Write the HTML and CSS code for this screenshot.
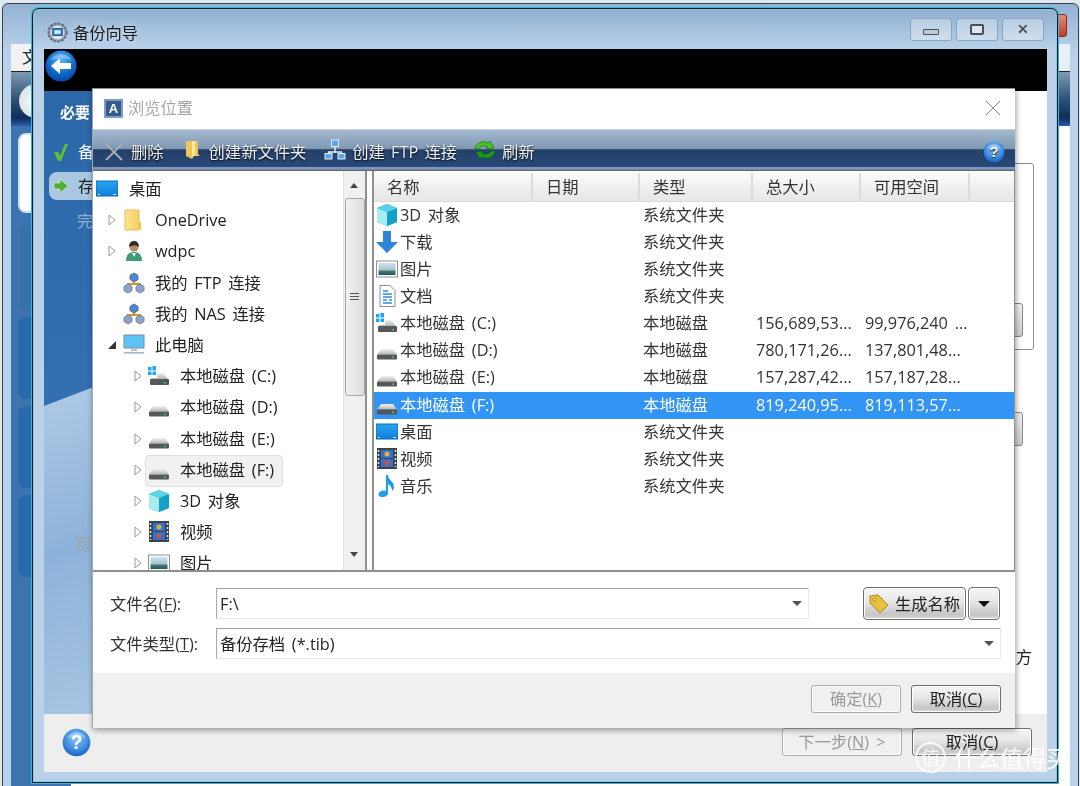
FILE: index.html
```html
<!DOCTYPE html>
<html lang="zh">
<head>
<meta charset="utf-8">
<title>备份向导</title>
<link rel="stylesheet" href="styles.css">
</head>
<body>
<svg class="sprite" width="0" height="0" aria-hidden="true">
  <defs>
    <linearGradient id="gDesk" x1="0" y1="0" x2="0" y2="1"><stop offset="0" stop-color="#2aa3f5"/><stop offset="1" stop-color="#0f7fd8"/></linearGradient>
    <linearGradient id="gFolder" x1="0" y1="0" x2="1" y2="0"><stop offset="0" stop-color="#ffe48f"/><stop offset="1" stop-color="#f6cf62"/></linearGradient>
    <linearGradient id="gDrive" x1="0" y1="0" x2="0" y2="1"><stop offset="0" stop-color="#f2f2f2"/><stop offset="1" stop-color="#b4b4b4"/></linearGradient>
    <linearGradient id="gPic" x1="0" y1="0" x2="0" y2="1"><stop offset="0" stop-color="#cfe3f2"/><stop offset=".55" stop-color="#a5c4d6"/><stop offset=".7" stop-color="#3f7a5c"/><stop offset="1" stop-color="#27506a"/></linearGradient>
    <radialGradient id="gOrb" cx=".5" cy=".35" r=".7"><stop offset="0" stop-color="#8cc6f7"/><stop offset=".6" stop-color="#3d8de0"/><stop offset="1" stop-color="#1459b8"/></radialGradient>
    <radialGradient id="gBack" cx=".5" cy=".3" r=".75"><stop offset="0" stop-color="#5fb6f5"/><stop offset=".6" stop-color="#0f67c9"/><stop offset="1" stop-color="#063f98"/></radialGradient>
    <symbol id="i-desk" viewBox="0 0 22 22"><rect x="0" y="3" width="22" height="15" fill="url(#gDesk)" stroke="#0b6dbc"/><path d="M2 16.500h2M17 16.500h3" stroke="#dff1ff"/></symbol>
    <symbol id="i-folder" viewBox="0 0 22 22"><path d="M2 1h11l3 0v20H2z" fill="url(#gFolder)" stroke="#e8c05a"/><path d="M15 13l3 0v8h-3z" fill="#f1c54f"/></symbol>
    <symbol id="i-user" viewBox="0 0 22 22"><path d="M3 21c0-6 3-9 8-9s8 3 8 9z" fill="#3e9d72"/><path d="M9 13l2 4 2-4z" fill="#fff"/><circle cx="11" cy="7" r="4.600" fill="#b98a6a"/><path d="M6 7c0-5 3-6 5-6s5 1 5 6c-2-2-7-2-10 0z" fill="#3a2a20"/></symbol>
    <symbol id="i-net" viewBox="0 0 22 22"><path d="M11 7v6M5 14v-2h12v2" stroke="#c79a2e" stroke-width="1.800" fill="none"/><path d="M11 1l4 2.500v4L11 10 7 7.500v-4z" fill="#4f86d6" stroke="#5a6a86"/><path d="M5 12l4 2.500v4L5 21l-4-2.500v-4z" fill="#8aa4cf" stroke="#7c8296"/><path d="M17 12l4 2.500v4L17 21l-4-2.500v-4z" fill="#8aa4cf" stroke="#7c8296"/></symbol>
    <symbol id="i-netw" viewBox="0 0 22 22"><path d="M11 8v6M4.500 15v-2h13v2" stroke="#e8eef6" stroke-width="1.400" fill="none"/><rect x="7.500" y="1" width="7" height="6.500" fill="#5aa6ee" stroke="#e8eef6"/><rect x="1" y="14.500" width="7" height="5.500" fill="#5aa6ee" stroke="#e8eef6"/><rect x="14" y="14.500" width="7" height="5.500" fill="#5aa6ee" stroke="#e8eef6"/></symbol>
    <symbol id="i-pc" viewBox="0 0 22 22"><rect x="1" y="1" width="20" height="13" fill="#5cc4f5" stroke="#7d8ba0"/><rect x="8" y="15" width="6" height="2" fill="#b8c0cc"/><rect x="1" y="18" width="20" height="1.600" fill="#a9b6c6"/></symbol>
    <symbol id="i-drive" viewBox="0 0 22 22"><path d="M5 10h12l4 5.500H1z" fill="url(#gDrive)"/><rect x="1" y="15.500" width="20" height="5" rx="1" fill="#55575a"/><rect x="16" y="17.500" width="2" height="1.500" fill="#3fd04f"/></symbol>
    <symbol id="i-sys" viewBox="0 0 22 22"><g fill="#1fa6f0"><rect x="0" y="2" width="3.500" height="3.500"/><rect x="4.500" y="1" width="3.500" height="4.500"/><rect x="0" y="6.500" width="3.500" height="3.500"/><rect x="4.500" y="6.500" width="3.500" height="3.500"/></g><path d="M9 8h6l5 6H3l1-1h5z" fill="url(#gDrive)"/><rect x="2" y="14" width="19" height="6" rx="1" fill="#55575a"/><rect x="16" y="17" width="2" height="1.500" fill="#3fd04f"/></symbol>
    <symbol id="i-cube" viewBox="0 0 22 22"><path d="M11 0l10 4v14l-10 4-10-4V4z" fill="#2cb6d8"/><path d="M1 4l10 4v14l-10-4z" fill="#a6ecf0"/><path d="M11 8l10-4v14l-10 4z" fill="#13a0c9"/><path d="M11 0l10 4-10 4L1 4z" fill="#5bd2e6"/></symbol>
    <symbol id="i-video" viewBox="0 0 22 22"><rect x="1" y="0" width="20" height="21" fill="#3e4348"/><rect x="5" y="2" width="12" height="8" fill="#2e72d6"/><rect x="5" y="11" width="12" height="8" fill="#2e72d6"/><circle cx="11" cy="6" r="2.500" fill="#e9b02f"/><circle cx="11" cy="15" r="2.500" fill="#d94f36"/><path d="M2.500 2v17M19.500 2v17" stroke="#dfe4ea" stroke-width="1.500" stroke-dasharray="2 2"/></symbol>
    <symbol id="i-pic" viewBox="0 0 22 22"><rect x=".5" y="3" width="21" height="16" fill="#fff" stroke="#8c8f93"/><rect x="2.500" y="5" width="17" height="12" fill="url(#gPic)"/></symbol>
    <symbol id="i-down" viewBox="0 0 22 22"><path d="M7 0h8v11h7L11 22 0 11h7z" fill="#2d84d8"/></symbol>
    <symbol id="i-doc" viewBox="0 0 22 22"><path d="M4 .5h10l5 5v16H4z" fill="#fff" stroke="#8a8f96"/><path d="M7 6h5M7 9h9M7 12h9M7 15h4M13 15h3M7 18h9" stroke="#2f8ae0" stroke-width="1.400"/></symbol>
    <symbol id="i-music" viewBox="0 0 22 22"><path d="M10 0h2c0 5 6 6 6 12 0 2-1 3-2 4 0-4-2-6-4-7v9c0 3-3 4-6 4-3 0-4-2-3-4s4-3 7-2z" fill="#1d9ce8"/></symbol>
    <symbol id="i-closed" viewBox="0 0 8 12"><path d="M1 1l6 5-6 5z" fill="#fff" stroke="#9a9a9a"/></symbol>
    <symbol id="i-open" viewBox="0 0 8 8"><path d="M8 0v8H0z" fill="#333"/></symbol>
    <symbol id="i-help" viewBox="0 0 22 22"><circle cx="11" cy="11" r="10.500" fill="url(#gOrb)"/><path d="M4 8c2-6 12-6 14 0-4-2-10-2-14 0z" fill="#fff" opacity=".35"/><text x="11" y="16" text-anchor="middle" class="help-mark">?</text></symbol>
    <symbol id="i-app" viewBox="0 0 24 24"><circle cx="12" cy="12" r="10.500" fill="#8a9aae" stroke="#5d6b80" stroke-width="2" stroke-dasharray="3 1.500"/><circle cx="12" cy="12" r="8" fill="#dbe6f0"/><rect x="6.500" y="7.500" width="11" height="8" fill="#3f83c9" stroke="#234a78"/><rect x="8.500" y="9.500" width="7" height="4" fill="#d8ecfb"/></symbol>
  </defs>
</svg>

<main class="desktop">
  <section class="win win-back">
    <header class="back-title"><span class="back-close"></span></header>
    <div class="back-tabs"><span class="back-tab">文</span></div>
    <div class="back-band"><span class="back-orb"></span></div>
    <div class="back-body">
      <aside class="back-side">
        <div class="back-card"></div>
        <div class="back-block faint"></div>
        <div class="back-block"></div>
        <div class="back-block"></div>
        <div class="back-block"></div>
      </aside>
      <div class="back-main"></div>
    </div>
  </section>

  <section class="win win-front">
    <header class="front-title">
      <svg class="ico-app"><use href="#i-app"/></svg>
      <h1 class="front-heading">备份向导</h1>
      <div class="caption">
        <span class="cap-btn"><i class="cap-min"></i></span>
        <span class="cap-btn"><i class="cap-max"></i></span>
        <span class="cap-btn cap-x">✕</span>
      </div>
    </header>
    <div class="front-inner">
      <div class="black-bar">
        <svg class="back-btn" viewBox="0 0 32 32"><circle cx="16" cy="16" r="15.500" fill="url(#gBack)"/><path d="M5 10c5-8 17-8 22 0-6-2-16-2-22 0z" fill="#fff" opacity=".3"/><path d="M6 16l9-8v5h11v6H15v5z" fill="#fff"/></svg>
      </div>
      <div class="front-body">
        <aside class="wiz-side">
          <div class="wiz-head">必要</div>
          <div class="wiz-step">
            <svg class="wiz-ico" viewBox="0 0 16 18"><path d="M1 9l4 0 2 4 5-12 3 0-7 17H5z" fill="#5fc331"/></svg>
            <span>备</span>
          </div>
          <div class="wiz-step is-current">
            <svg class="wiz-ico" viewBox="0 0 16 16"><path d="M1 5h6V1l8 7-8 7v-4H1z" fill="#4cae34" stroke="#e8f5df" stroke-width=".6"/></svg>
            <span>存</span>
          </div>
          <div class="wiz-step is-later"><span>完</span></div>
          <div class="wiz-other">可</div>
        </aside>
        <div class="wiz-main">
          <div class="group-box"><span class="stub stub-a"></span></div>
          <span class="stub stub-b"></span>
          <span class="side-word">方</span>
        </div>
      </div>
      <footer class="wiz-foot">
        <svg class="wiz-help"><use href="#i-help"/></svg>
        <button class="btn is-disabled btn-next">下一步(<u>N</u>) &gt;</button>
        <button class="btn btn-cancel">取消(<u>C</u>)</button>
      </footer>
    </div>
  </section>

  <section class="dialog">
    <header class="dlg-title">
      <span class="dlg-logo">A</span>
      <h2 class="dlg-heading">浏览位置</h2>
      <span class="dlg-close"></span>
    </header>
    <nav class="toolbar">
      <span class="tool tool-del"><svg class="tool-x" viewBox="0 0 18 18"><path d="M1 1l16 16M17 1L1 17" stroke="#a9afb6" stroke-width="1.800"/></svg>删除</span>
      <span class="tool tool-new"><svg class="tool-folder" viewBox="0 0 16 20"><path d="M2 1h6l6 0v13l2 2h-6l-2 3-6-3z" fill="#eec55a"/><path d="M8 1h3v15H8z" fill="#fbe9a2"/></svg>创建新文件夹</span>
      <span class="tool tool-ftp"><svg class="tool-net"><use href="#i-netw"/></svg>创建 FTP 连接</span>
      <span class="tool tool-refresh"><svg class="tool-ref" viewBox="0 0 22 20"><path d="M1 9c1-6 7-9 13-6l2-2 4 7-8 1 2-2c-4-2-8-1-9 2z" fill="#46c61f" stroke="#0e5c12" stroke-width=".6"/><path d="M21 11c-1 6-7 9-13 6l-2 2-4-7 8-1-2 2c4 2 8 1 9-2z" fill="#179a1c" stroke="#0e5c12" stroke-width=".6"/></svg>刷新</span>
      <svg class="tool-help"><use href="#i-help"/></svg>
    </nav>

    <div class="panes">
      <div class="tree-pane">
        <ul class="tree">
          <li class="node l0"><svg class="ico"><use href="#i-desk"/></svg><span>桌面</span></li>
          <li class="node l1"><svg class="arrow"><use href="#i-closed"/></svg><svg class="ico"><use href="#i-folder"/></svg><span>OneDrive</span></li>
          <li class="node l1"><svg class="arrow"><use href="#i-closed"/></svg><svg class="ico"><use href="#i-user"/></svg><span>wdpc</span></li>
          <li class="node l1"><i class="arrow"></i><svg class="ico"><use href="#i-net"/></svg><span>我的 FTP 连接</span></li>
          <li class="node l1"><i class="arrow"></i><svg class="ico"><use href="#i-net"/></svg><span>我的 NAS 连接</span></li>
          <li class="node l1"><svg class="arrow"><use href="#i-open"/></svg><svg class="ico"><use href="#i-pc"/></svg><span>此电脑</span></li>
          <li class="node l2"><svg class="arrow"><use href="#i-closed"/></svg><svg class="ico"><use href="#i-sys"/></svg><span>本地磁盘 (C:)</span></li>
          <li class="node l2"><svg class="arrow"><use href="#i-closed"/></svg><svg class="ico"><use href="#i-drive"/></svg><span>本地磁盘 (D:)</span></li>
          <li class="node l2"><svg class="arrow"><use href="#i-closed"/></svg><svg class="ico"><use href="#i-drive"/></svg><span>本地磁盘 (E:)</span></li>
          <li class="node l2 is-picked"><svg class="arrow"><use href="#i-closed"/></svg><svg class="ico"><use href="#i-drive"/></svg><span>本地磁盘 (F:)</span></li>
          <li class="node l2"><svg class="arrow"><use href="#i-closed"/></svg><svg class="ico"><use href="#i-cube"/></svg><span>3D 对象</span></li>
          <li class="node l2"><svg class="arrow"><use href="#i-closed"/></svg><svg class="ico"><use href="#i-video"/></svg><span>视频</span></li>
          <li class="node l2"><svg class="arrow"><use href="#i-closed"/></svg><svg class="ico"><use href="#i-pic"/></svg><span>图片</span></li>
        </ul>
        <div class="vscroll">
          <span class="sb-up"></span>
          <span class="sb-thumb"><i></i></span>
          <span class="sb-down"></span>
        </div>
      </div>

      <div class="list-pane">
        <div class="list-head">
          <span>名称</span><span>日期</span><span>类型</span><span>总大小</span><span>可用空间</span><span></span>
        </div>
        <div class="row"><span class="name"><svg class="ico"><use href="#i-cube"/></svg>3D 对象</span><span>系统文件夹</span><span></span><span></span></div>
        <div class="row"><span class="name"><svg class="ico"><use href="#i-down"/></svg>下载</span><span>系统文件夹</span><span></span><span></span></div>
        <div class="row"><span class="name"><svg class="ico"><use href="#i-pic"/></svg>图片</span><span>系统文件夹</span><span></span><span></span></div>
        <div class="row"><span class="name"><svg class="ico"><use href="#i-doc"/></svg>文档</span><span>系统文件夹</span><span></span><span></span></div>
        <div class="row"><span class="name"><svg class="ico"><use href="#i-sys"/></svg>本地磁盘 (C:)</span><span>本地磁盘</span><span>156,689,53...</span><span>99,976,240 ...</span></div>
        <div class="row"><span class="name"><svg class="ico"><use href="#i-drive"/></svg>本地磁盘 (D:)</span><span>本地磁盘</span><span>780,171,26...</span><span>137,801,48...</span></div>
        <div class="row"><span class="name"><svg class="ico"><use href="#i-drive"/></svg>本地磁盘 (E:)</span><span>本地磁盘</span><span>157,287,42...</span><span>157,187,28...</span></div>
        <div class="row is-selected"><span class="name"><svg class="ico"><use href="#i-drive"/></svg>本地磁盘 (F:)</span><span>本地磁盘</span><span>819,240,95...</span><span>819,113,57...</span></div>
        <div class="row"><span class="name"><svg class="ico"><use href="#i-desk"/></svg>桌面</span><span>系统文件夹</span><span></span><span></span></div>
        <div class="row"><span class="name"><svg class="ico"><use href="#i-video"/></svg>视频</span><span>系统文件夹</span><span></span><span></span></div>
        <div class="row"><span class="name"><svg class="ico"><use href="#i-music"/></svg>音乐</span><span>系统文件夹</span><span></span><span></span></div>
      </div>
    </div>

    <form class="dlg-form">
      <div class="form-row row-name">
        <label class="form-label">文件名(<u>F</u>):</label>
        <div class="combo combo-name"><span>F:\</span><i class="combo-arrow"></i></div>
        <button type="button" class="btn btn-gen">
          <svg class="tag" viewBox="0 0 20 20"><path d="M1 2l8-1 10 10-8 8L1 9z" fill="#e9c03c" stroke="#b08a1c"/><circle cx="5.500" cy="5.500" r="1.500" fill="#fff6c8" stroke="#a5801a"/></svg>生成名称
        </button>
        <button type="button" class="btn btn-drop"><i></i></button>
      </div>
      <div class="form-row row-type">
        <label class="form-label">文件类型(<u>T</u>):</label>
        <div class="combo combo-type"><span>备份存档 (*.tib)</span><i class="combo-arrow"></i></div>
      </div>
    </form>

    <footer class="dlg-foot">
      <button type="button" class="btn is-disabled btn-ok">确定(<u>K</u>)</button>
      <button type="button" class="btn btn-dlg-cancel">取消(<u>C</u>)</button>
    </footer>
  </section>

  <aside class="watermark"><span class="wm-seal">值</span><span class="wm-text">什么值得买</span></aside>
</main>
</body>
</html>
```

FILE: styles.css
```css
* { box-sizing: border-box; }
html, body { margin: 0; padding: 0; }
body {
  font-family: "Open Sans", "Noto Sans CJK SC", sans-serif;
  font-size: 16.300px;
  word-spacing: 2.500px;
  line-height: 20px;
  color: #222;
}
h1, h2 { margin: 0; font-weight: 400; font-size: 16.300px; }
ul { margin: 0; padding: 0; list-style: none; }
u { text-underline-offset: 1px; }
.sprite { position: absolute; }
.help-mark { font: 700 15px "Liberation Sans", sans-serif; fill: #fff; }

.desktop {
  position: relative;
  width: 1080px;
  height: 786px;
  overflow: hidden;
  background: #dfe7ef;
  filter: blur(.35px);
}
.win { position: absolute; }

/* window behind */
.win-back {
  left: 2px; top: 3px; width: 1077px; height: 790px;
  display: flex; flex-direction: column;
  padding: 0 8px;
  background: linear-gradient(#93b2d3, #b9d2ea 50px);
  border: 1px solid #3b444c;
  border-radius: 6px 6px 0 0;
}
.back-title { height: 40px; display: flex; justify-content: flex-end; align-items: flex-start; padding-top: 10px; padding-right: 3px; }
.back-close { width: 12px; height: 23px; flex: none; background: linear-gradient(#e88a78, #c53a26); border: 1px solid #8a2a1c; border-radius: 0 3px 3px 0; }
.back-tabs { height: 27px; background: #e9eff6; display: flex; }
.back-tab { padding: 3px 0 0 11px; width: 40px; background: #f3f1f2; }
.back-band {
  height: 55px; flex: none; padding: 12px 0 0 8px;
  background: linear-gradient(#7f9ab4, #2e5377 50%, #0e2d57 85%, #2f58b0);
  border-top: 1px solid #222;
}
.back-orb { display: block; width: 34px; height: 34px; border-radius: 50%; background: radial-gradient(#fff, #cdd6dc); }
.back-body { flex: 1; display: flex; }
.back-side {
  width: 60px; padding: 7px 0 0 7px;
  display: flex; flex-direction: column; gap: 7px;
  background: #3d73af;
}
.back-card { height: 80px; flex: none; margin-bottom: 5px; background: #fff; border-radius: 8px 0 0 8px; border: 2px solid #cfe0ef; }
.back-block { height: 82px; flex: none; background: #2a69ab; border-radius: 8px 0 0 8px; }
.back-block.faint { background: #3670ad; height: 85px; margin-left: 2px; }
.back-main { flex: 1; background: #fff; }

/* wizard window */
.win-front {
  left: 32px; top: 8px; width: 1026px; height: 775px;
  display: flex; flex-direction: column;
  padding: 0 10px 10px 11px;
  background: linear-gradient(#90afd0, #b9d2ea 40px);
  border: 1px solid #0b1c24;
  border-radius: 7px 7px 0 0;
  box-shadow: inset 0 0 0 1px #8ec7e6, 0 0 0 1px #2fb7d6;
}
.front-title { height: 40px; flex: none; display: flex; align-items: center; padding-top: 7px; }
.ico-app { width: 21px; height: 21px; margin-left: 3px; margin-right: 5px; }
.front-heading { color: #1b1b1b; text-shadow: 0 0 6px #dbe8f5; }
.caption { margin-left: auto; margin-right: 3px; margin-top: -7px; display: flex; gap: 4px; }
.cap-btn {
  width: 42px; height: 23px;
  display: flex; align-items: center; justify-content: center;
  border: 1px solid #8ba4bf; border-radius: 3px;
  background: linear-gradient(#b8cde2, #cfdeee);
  font: 700 14px "Liberation Sans", sans-serif;
  color: #45505c;
}
.cap-x { text-shadow: 0 0 1px #fff; }
.cap-min { display: block; width: 16px; height: 6px; margin-top: 5px; background: #c2c9cf; border: 1px solid #44505c; border-radius: 1px; }
.cap-max { display: block; width: 14px; height: 11px; border: 2px solid #44505c; border-radius: 2px; background: #dbe6f0; }

.front-inner { flex: 1; display: flex; flex-direction: column; }
.black-bar { height: 42px; flex: none; background: #000; display: flex; align-items: flex-start; padding: 1px 0 0 1px; }
.back-btn { width: 32px; height: 32px; display: block; }
.front-body { flex: 1; display: flex; min-height: 0; }
.wiz-side {
  width: 300px; flex: none;
  display: flex; flex-direction: column;
  padding-top: 11px;
  color: #fff;
  background: linear-gradient(#2c67a8, #3b79bb);
  position: relative;
  overflow: hidden;
}
.wiz-side::before {
  content: "";
  position: absolute; left: 0; right: 0; bottom: 0; top: 200px;
  background: linear-gradient(160deg, #c2d7ec 0, #8db2d9 50%, #b5cfe8 100%);
  clip-path: polygon(0 115px, 100% 0, 100% 100%, 0 100%);
}
.wiz-head { position: relative; padding: 0 0 0 16px; font-weight: 700; height: 22px; font-size: 15px; }
.wiz-step { position: relative; display: flex; align-items: center; gap: 9px; padding-left: 9px; height: 28px; margin-top: 14px; }
.wiz-ico { width: 16px; height: 18px; flex: none; }
.wiz-step.is-current { margin: 6px 0 0 5px; padding-left: 4px; border-radius: 8px; background: #a9c7e1; color: #222; gap: 9px; }
.wiz-step.is-later { color: #8cb0d5; margin-top: 7px; padding-left: 33px; }
.wiz-other { position: relative; color: #a3a3a3; margin-top: 299px; padding-left: 31px; }
.wiz-main { flex: 1; background: #fff; position: relative; }
.group-box {
  position: absolute; right: 13px; top: 72px; width: 100%; height: 187px;
  border: 1px solid #8c8c8c; border-radius: 3px;
}
.stub {
  position: absolute; width: 30px; height: 34px;
  border: 1px solid #888; border-radius: 3px;
  background: linear-gradient(#f4f4f4, #cfcfcf);
}
.stub-a { right: 10px; top: 139px; }
.stub-b { right: 24px; top: 321px; }
.side-word { position: absolute; right: 15px; top: 556px; }

.wiz-foot {
  height: 58px; flex: none;
  display: flex; align-items: flex-start;
  padding: 14px 15px 0 18px;
  background: #eee;
}
.wiz-help { width: 29px; height: 29px; }
.btn {
  height: 28px; padding: 0;
  font: inherit; color: #222;
  word-spacing: 0;
  border: 1px solid #6e6e6e; border-radius: 3px;
  background: linear-gradient(#f6f6f6, #e6e6e6 45%, #c6c6c6 85%, #d8d8d8);
  box-shadow: inset 0 0 0 1px #fff;
  display: flex; align-items: center; justify-content: center;
}
.btn.is-disabled { color: #9a9a9a; background: #f0f0f0; border-color: #ababab; }
.btn-next { width: 120px; margin-left: auto; word-spacing: 3px; }
.btn-cancel { width: 120px; margin-left: 10px; }

/* browse dialog */
.dialog {
  position: absolute; left: 92px; top: 88px; width: 923px; height: 640px;
  display: flex; flex-direction: column;
  background: #fff;
  border-left: 1px solid #a5a5a5;
  border-top: 1px solid #8d8d8d;
  box-shadow: 1px 2px 6px rgba(0,0,0,.4);
}
.dlg-title { height: 41px; flex: none; display: flex; align-items: center; padding: 0 15px 2px 11px; border-bottom: 1px solid #c9ced8; }
.dlg-logo {
  width: 19px; height: 19px; margin-right: 5px;
  display: flex; align-items: center; justify-content: center;
  font: 700 13px "Liberation Sans", sans-serif; color: #fff;
  background: #345b8d; border: 2px solid #7d9cc3;
}
.dlg-heading { color: #a8a8a8; }
.dlg-close {
  margin-left: auto; width: 14px; height: 14px;
  background:
    linear-gradient(45deg, transparent 47%, #888 47% 53%, transparent 53%),
    linear-gradient(-45deg, transparent 47%, #888 47% 53%, transparent 53%);
}
.toolbar {
  height: 41px; flex: none;
  display: flex; align-items: center;
  padding: 3px 10px 0 12px;
  color: #eef1f5;
  word-spacing: 2px;
  text-shadow: 0 1px 2px #000;
  background: linear-gradient(#a3b9d1, #7f97b1 48%, #234168 49%, #2a4878 92%, #8aa0c8 94%, #6c83a8);
  border-bottom: 1px solid #666;
}
.tool { display: flex; align-items: center; gap: 8px; }
.tool-del { margin-right: 20px; }
.tool-new { margin-right: 18px; gap: 9px; }
.tool-ftp { margin-right: 17px; gap: 6px; }
.tool-refresh { gap: 6px; }
.tool-x { width: 18px; height: 18px; }
.tool-folder { width: 16px; height: 20px; margin-top: -4px; }
.tool-net { width: 22px; height: 22px; margin-top: -4px; }
.tool-ref { width: 22px; height: 20px; margin-top: -4px; }
.tool-help { width: 22px; height: 22px; margin-left: auto; }

.panes { height: 401px; flex: none; display: flex; gap: 5px; border-bottom: 2px solid #8f8f8f; }
.tree-pane {
  width: 274px; flex: none;
  display: flex;
  overflow: hidden;
  border-right: 2px solid #8f8f8f;
  background: #fff;
}
.tree { flex: 1; min-width: 0; padding-top: 2.500px; }
.node { display: flex; align-items: center; height: 31.200px; white-space: nowrap; }
.node .ico { width: 22px; height: 22px; flex: none; }
.arrow { width: 8px; height: 12px; flex: none; display: block; }
.l0 { padding-left: 3px; gap: 11px; }
.l1 { padding-left: 15px; }
.l1 .arrow { margin-right: 7px; }
.l1 .ico { margin-right: 10px; }
.l2 { padding-left: 41px; }
.l2 .arrow { margin-right: 6px; }
.l2 .ico { margin-right: 10px; }
.is-picked { position: relative; }
.is-picked::before {
  content: ""; position: absolute; left: 52px; top: 1px; width: 136px; height: 30px;
  background: #f1f1f1; border: 1px solid #dedede; border-radius: 4px; z-index: 0;
}
.is-picked > * { position: relative; }
.vscroll { width: 22px; flex: none; position: relative; background: #f0f0f0; border-left: 1px solid #dedede; display: flex; flex-direction: column; align-items: center; }
.sb-up, .sb-down { height: 26px; flex: none; width: 100%; position: relative; }
.sb-up { height: 27px; }
.sb-up::after, .sb-down::after {
  content: ""; position: absolute; left: 6px; top: 12px;
  border: 4px solid transparent; border-top-width: 0; border-bottom: 5px solid #444;
}
.sb-down { margin-top: auto; }
.sb-down::after { top: 8px; border-bottom-width: 0; border-top: 5px solid #444; border-left-width: 4px; }
.sb-thumb {
  height: 198px; width: 20px; flex: none;
  display: flex; align-items: center; justify-content: center;
  background: linear-gradient(90deg, #f2f2f2, #dcdcdc);
  border: 1px solid #a7a7a7; border-radius: 3px;
}
.sb-thumb i { width: 9px; height: 9px; background: repeating-linear-gradient(#555 0 1px, transparent 1px 3px); }

.list-pane { flex: 1; min-width: 0; overflow: hidden; border-left: 2px solid #8f8f8f; border-right: 1px solid #8f8f8f; background: #fff; padding-top: 2px; }
.list-head {
  height: 29px;
  display: grid; grid-template-columns: 159px 107px 113px 108px 109px 1fr;
  background: linear-gradient(#fbfbfb, #f0f0f0 50%, #e6e6e6);
  border-bottom: 1px solid #dcdcdc;
}
.list-head span { padding-left: 13px; line-height: 28px; border-right: 2px solid #dcdcdc; color: #333; }
.list-head span:last-child { border-right: 0; }
.row {
  display: grid; grid-template-columns: 269px 113px 109px 1fr;
  height: 27.150px; align-items: center;
  padding-bottom: 2px;
  color: #333; white-space: nowrap;
}
.row > span:first-child { padding-left: 2px; }
.name { display: flex; align-items: center; gap: 2px; }
.name .ico { width: 22px; height: 22px; flex: none; }
.row.is-selected { background: #3294f5; color: #fff; }

.dlg-form { height: 101px; flex: none; padding-top: 15px; }
.form-row { display: flex; align-items: center; padding-left: 17px; }
.form-label { width: 106px; flex: none; color: #333; }
.row-name { height: 33px; }
.row-type { height: 31px; margin-top: 8px; }
.combo {
  display: flex; align-items: center; justify-content: space-between;
  padding: 0 6px 0 3px;
  background: #fff;
  border: 1px solid #e4e8ef; border-top-color: #a0a0a0; border-left-color: #a9a9a9;
}
.combo-name { width: 593px; height: 31px; }
.combo-type { width: 785px; height: 31px; }
.combo-arrow { border: 5px solid transparent; border-top: 5px solid #555; border-bottom-width: 0; }
.btn-gen { width: 103px; height: 33px; margin-left: 54px; gap: 6px; border-radius: 4px; }
.tag { width: 20px; height: 20px; }
.btn-drop { width: 32px; height: 33px; margin-left: 2px; border-radius: 4px; }
.btn-drop i { border: 6px solid transparent; border-top: 6px solid #111; border-bottom-width: 0; }

.dlg-foot {
  flex: 1; display: flex; justify-content: flex-end; gap: 10px;
  padding: 12px 14px 0 0;
  background: #f0f0f0;
}
.btn-ok { width: 90px; }
.btn-dlg-cancel { width: 90px; }

/* watermark */
.watermark {
  position: absolute; left: 915px; top: 742px;
  display: flex; align-items: center; gap: 8px;
  word-spacing: 0;
  color: rgba(255,255,255,.82);
}
.wm-seal {
  width: 31px; height: 31px; border-radius: 50%;
  display: flex; align-items: center; justify-content: center;
  border: 2px solid rgba(255,255,255,.85);
  font-size: 19px;
}
.wm-text { font-size: 23px; text-shadow: 0 0 1px rgba(255,255,255,.5); }
```
